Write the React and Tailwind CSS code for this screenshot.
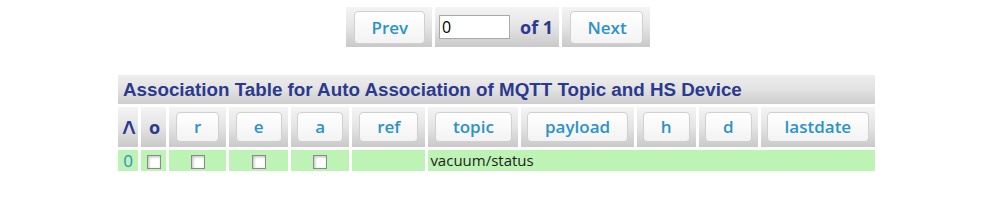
import React from 'react';

const cellBg = 'bg-linear-to-b from-[#f4f4f4] via-[#e4e4e4] to-[#c9c9c9]';
const btn =
  'inline-block rounded-[4px] border border-[#d0d0d0] bg-linear-to-b from-white to-[#f3f3f3] text-[#2a93cc] font-semibold text-[17px] leading-[28px] px-[17px]';
const arial = { fontFamily: '"Liberation Sans", Arial, sans-serif' };

const columns = [
  { label: '/\\', w: 'w-[20px]', plain: true },
  { label: 'o', w: 'w-[25px]', plain: true },
  { label: 'r', w: 'w-[57px]' },
  { label: 'e', w: 'w-[59px]' },
  { label: 'a', w: 'w-[58px]' },
  { label: 'ref', w: 'w-[73px]' },
  { label: 'topic', w: 'w-[90px]' },
  { label: 'payload', w: 'w-[112px]' },
  { label: 'h', w: 'w-[59px]' },
  { label: 'd', w: 'w-[59px]' },
  { label: 'lastdate', w: 'w-[114px]' },
];

const Box = () => (
  <span className="inline-block w-[14px] h-[14px] border border-[#8a8a8a] bg-white shadow-[inset_1px_1px_3px_#bcbcbc] align-middle" />
);

const App = () => {
  const rows = [{ id: 0, topic: 'vacuum/status' }];

  return (
    <div className="w-[1000px] h-[211px] bg-white pt-[4px]" style={{ fontFamily: '"Open Sans", sans-serif' }}>
      <table className="ml-[343px] border-separate border-spacing-[3px] table-fixed w-[310px]">
        <colgroup>
          <col className="w-[86px]" />
          <col className="w-[124px]" />
          <col className="w-[88px]" />
        </colgroup>
        <tbody>
          <tr>
            <td className={`${cellBg} h-[40px] px-[6px] text-center`}>
              <span className={`${btn} w-[71px] leading-[31px] px-0`}>Prev</span>
            </td>
            <td className={`${cellBg} px-[4px]`}>
              <div className="flex items-center">
                <input
                  defaultValue="0"
                  className="w-[71px] h-[24px] border border-[#a9a9a9] bg-white px-[2px] text-[16px] text-black outline-none"
                />
                <span className="ml-[10px] font-bold text-[18px] text-[#2b3990]">of 1</span>
              </div>
            </td>
            <td className={`${cellBg} px-[6px] text-center`}>
              <span className={`${btn} w-[73px] leading-[31px] px-0`}>Next</span>
            </td>
          </tr>
        </tbody>
      </table>

      <table className="ml-[115px] mt-[22px] border-separate border-spacing-[3px] table-fixed w-[763px]">
        <colgroup>
          {columns.map((c) => (
            <col key={c.label} className={c.w} />
          ))}
        </colgroup>
        <tbody>
          <tr>
            <td
              colSpan={11}
              className="h-[29px] px-[5px] bg-linear-to-b from-[#eeeeee] via-[#e2e2e2] to-[#cdcdcd] text-[#2b3990] font-bold text-[18.8px] leading-[29px] whitespace-nowrap"
              style={arial}
            >
              Association Table for Auto Association of MQTT Topic and HS Device
            </td>
          </tr>
          <tr>
            {columns.map((c) => (
              <td key={c.label} className={`${cellBg} h-[40px] p-0 text-center`}>
                {c.plain ? (
                  <span className="font-bold text-[18px] text-[#2b3990] tracking-[-2px]">{c.label}</span>
                ) : (
                  <span className={btn}>{c.label}</span>
                )}
              </td>
            ))}
          </tr>
          {rows.map((r) => (
            <tr key={r.id} className="bg-[#bdf3b5] h-[21px]">
              <td className="text-center text-[17px] leading-[21px] text-[#2e8fbf] p-0">{r.id}</td>
              <td className="text-center p-0 leading-[21px]"><Box /></td>
              <td className="text-center p-0 leading-[21px]"><Box /></td>
              <td className="text-center p-0 leading-[21px]"><Box /></td>
              <td className="text-center p-0 leading-[21px]"><Box /></td>
              <td className="p-0"></td>
              <td colSpan={5} className="px-[2px] text-[15px] leading-[21px] text-[#1e1e1e]">{r.topic}</td>
            </tr>
          ))}
        </tbody>
      </table>
    </div>
  );
};

export default App;
